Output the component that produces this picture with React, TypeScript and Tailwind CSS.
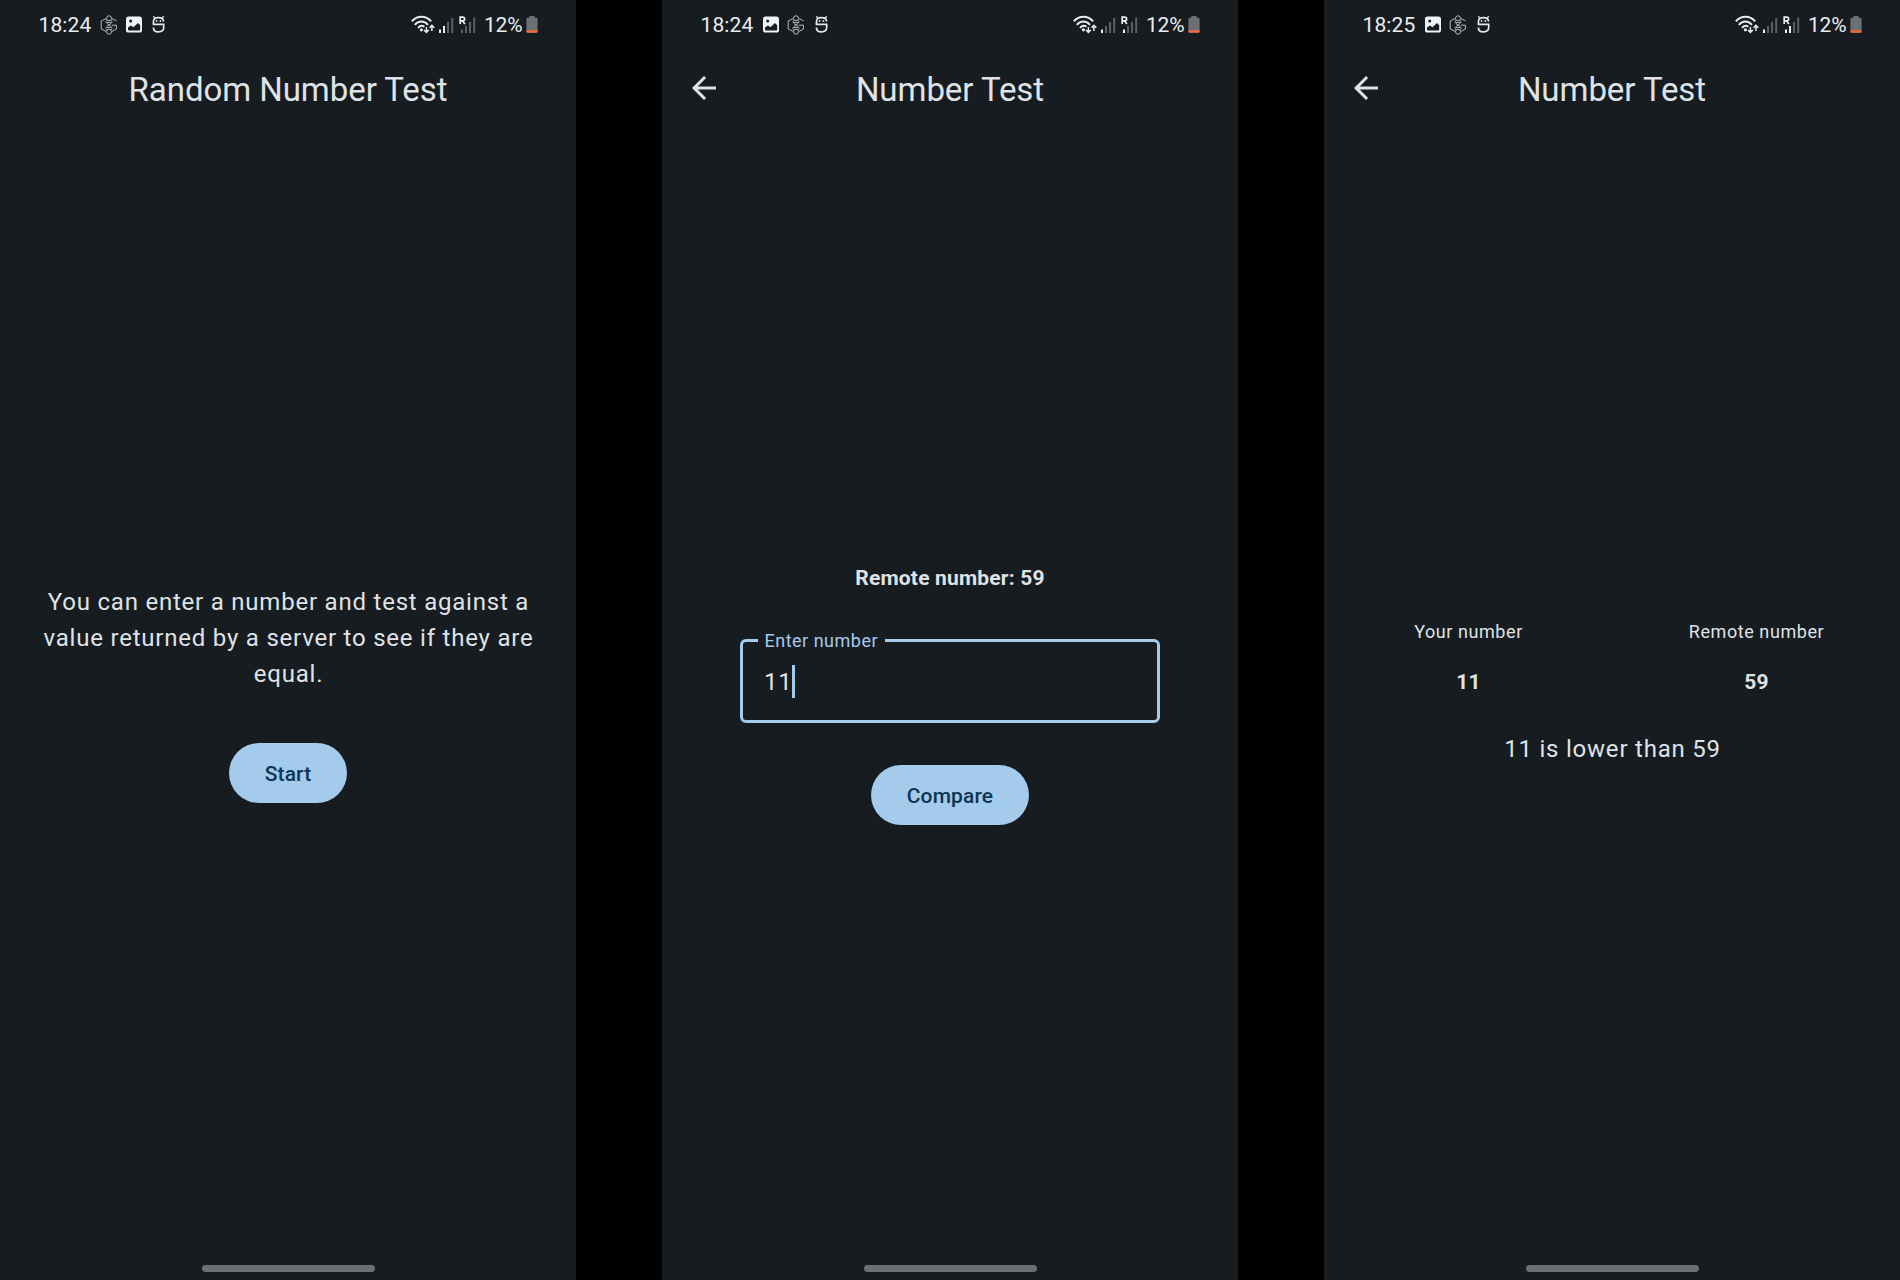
import React from "react";

const GHexIcon = () => (
  <svg width="18" height="20" viewBox="0 0 18 20" fill="none" stroke="#b4bbbf" strokeWidth="1">
    <path d="M6 3.6 1.2 6v8L6 16.4M12 3.6l4.4 2.2M12 16.4l4.4-2.4v-3.8h-4.6" />
    <circle cx="9" cy="3.3" r="2.5" />
    <circle cx="9" cy="16.7" r="2.5" />
    <path d="M7 5.2C5 7 6.4 8.2 9 10s4 3 2 4.8M11 5.2C13 7 11.6 8.2 9 10s-4 3-2 4.8M6.8 7.6h4.4M6.8 12.4h4.4" />
  </svg>
);

const ImageIcon = () => (
  <svg width="16" height="17" viewBox="0 0 16 17">
    <rect x="0" y="0.5" width="16" height="16" rx="2.6" fill="#f0f4f6" />
    <circle cx="4.7" cy="5" r="1.5" fill="#181d20" />
    <path d="M2 13.5V11.6L5 9.4 7.4 11.2 12 7 14.2 9.2V13.5Q14.2 14.4 13.3 14.4H2.9Q2 14.4 2 13.5Z" fill="#181d20" />
  </svg>
);

const BotIcon = () => (
  <svg width="13" height="17" viewBox="0 0 13 17" fill="none" stroke="#e2e7ea" strokeWidth="1.7">
    <path d="M1.3 .4 2.9 2.2M11.7 .4 10.1 2.2" strokeWidth="1.4" />
    <path d="M1.5 8.2V5.4C1.5 3 3.5 1.7 6.5 1.7s5 1.3 5 3.7" />
    <path d="M.7 8.3h11v3c0 2.9-2.1 4.6-5.2 4.6s-5.1-1.6-5.1-4.5" />
    <circle cx="4.6" cy="5" r=".9" fill="#e2e7ea" stroke="none" />
    <circle cx="8.4" cy="5" r=".9" fill="#e2e7ea" stroke="none" />
  </svg>
);

const WifiIcon = () => (
  <svg width="24" height="19" viewBox="0 0 24 19" fill="none" stroke="#e6ebee" strokeWidth="1.9">
    <path d="M.8 6.4C6.2.2 14.8.2 20.2 6.4" />
    <path d="M3.8 9.8c3.8-4.4 9.4-4.4 13.2 0" />
    <path d="M7 12.8c2.2-2.4 4.6-2.4 6.4-1" />
    <circle cx="10.4" cy="14.8" r="1.6" fill="#e6ebee" stroke="none" />
    <path d="M15.4 12v5.2M13 15l2.4 2.4 2.4-2.4M20.9 16v-5M18.5 12.8l2.4-2.4 2.4 2.4" strokeWidth="1.5" />
  </svg>
);

const bar = (lit: boolean) => (lit ? "#eef2f4" : "#596064");

const SignalIcon = ({ level }: { level: number }) => (
  <svg width="15" height="16" viewBox="0 0 15 16">
    <rect x="0" y="12.5" width="2" height="3.5" fill={bar(level > 0)} />
    <rect x="4" y="9" width="2" height="7" fill={bar(level > 1)} />
    <rect x="8" y="5" width="2" height="11" fill={bar(level > 2)} />
    <rect x="12.2" y="1" width="2" height="15" fill={bar(level > 3)} />
  </svg>
);

const RoamingIcon = ({ level }: { level: number }) => (
  <svg width="17" height="17" viewBox="0 0 17 17">
    <path d="M1.2 8V1.1h2.5q1.9 0 1.9 1.9T3.7 4.9H1.2M3.6 4.9 5.9 8" fill="none" stroke="#eef2f4" strokeWidth="1.7" />
    <rect x="2" y="13.5" width="2" height="3.5" fill={bar(level > 0)} />
    <rect x="6" y="10" width="2" height="7" fill={bar(level > 1)} />
    <rect x="10" y="6" width="2" height="11" fill={bar(level > 2)} />
    <rect x="14.2" y="1.5" width="2" height="15.5" fill={bar(level > 3)} />
  </svg>
);

const BatteryIcon = () => (
  <svg width="12" height="17" viewBox="0 0 12 17">
    <path d="M3.4 0h5.2v1.8h1.6Q11.6 1.8 11.6 3.2V15.4Q11.6 16.8 10.2 16.8H1.8Q.4 16.8 .4 15.4V3.2Q.4 1.8 1.8 1.8H3.4Z" fill="#6b7073" />
    <path d="M.4 14.2H11.6V15.4Q11.6 16.8 10.2 16.8H1.8Q.4 16.8 .4 15.4Z" fill="#f0683e" />
  </svg>
);

interface StatusBarProps {
  time: string;
  imageFirst: boolean;
  signal: number;
  roaming: number;
}

const StatusBar = ({ time, imageFirst, signal, roaming }: StatusBarProps) => (
  <div className="flex h-[49px] items-center pl-[38.5px] pr-[38px] text-[21px] leading-6 text-[#e9eef1]">
    <span className="w-[51.5px] whitespace-nowrap tracking-[0.1px]">{time}</span>
    <div className={imageFirst ? "ml-[11px] flex items-center gap-[8px]" : "ml-[10px] flex items-center gap-[8px]"}>
      {imageFirst ? <ImageIcon /> : <GHexIcon />}
      {imageFirst ? <GHexIcon /> : <ImageIcon />}
      <span className="ml-[2px]"><BotIcon /></span>
    </div>
    <div className="ml-auto flex items-center">
      <WifiIcon />
      <span className="ml-[4px]"><SignalIcon level={signal} /></span>
      <span className="ml-[5px]"><RoamingIcon level={roaming} /></span>
      <span className="ml-[8px] w-[41px] whitespace-nowrap tracking-[-0.2px]">12%</span>
      <span className="ml-[1px]"><BatteryIcon /></span>
    </div>
  </div>
);

interface PhoneProps {
  time: string;
  title: string;
  back?: boolean;
  signal: number;
  roaming: number;
  children: React.ReactNode;
}

const Phone = ({ time, title, back = false, signal, roaming, children }: PhoneProps) => (
  <section className="flex h-[1280px] w-[576px] flex-col bg-[#171c20] text-[#dfe3e7]">
    <StatusBar time={time} imageFirst={back} signal={signal} roaming={roaming} />
    <header className="grid h-[79px] grid-cols-[72px_1fr_72px] items-center">
      <div className="pb-[2px] pl-6">
        {back && (
          <svg width="36" height="36" viewBox="0 0 24 24" fill="#dfe3e7" aria-label="Back">
            <path d="M20 11H7.83l5.59-5.59L12 4l-8 8 8 8 1.41-1.41L7.83 13H20v-2z" />
          </svg>
        )}
      </div>
      <h1 className="pt-[3px] text-center text-[33px] leading-[42px] tracking-[-0.06px]">{title}</h1>
    </header>
    <main className="flex flex-1 flex-col items-center">{children}</main>
    <div className="mx-auto mb-[8px] h-[7px] w-[173px] rounded-full bg-[#6b7073]" />
  </section>
);

const PillButton = ({ children }: { children: React.ReactNode }) => (
  <button className="h-[60px] rounded-full bg-[#a4caec] px-9 pt-[2px] text-[21px] font-medium leading-[30px] tracking-[0.15px] text-[#0c3453]">
    {children}
  </button>
);

const Result = ({ label, value }: { label: string; value: string }) => (
  <div className="flex flex-1 flex-col items-center">
    <span className="pl-px text-[18px] leading-6 tracking-[0.57px]">{label}</span>
    <span className="mt-[23px] pl-px text-[21px] font-bold leading-[30px] tracking-[0.15px]">{value}</span>
  </div>
);

export default function App() {
  return (
    <div className="flex h-[1280px] w-[1900px] justify-between overflow-hidden bg-black font-['Roboto',sans-serif]">
      <Phone time="18:24" title="Random Number Test" signal={2} roaming={0}>
        <p className="mt-[456px] w-[528px] pl-px text-center text-[24px] leading-[36px] tracking-[0.78px]">
          You can enter a number and test against a<br />
          value returned by a server to see if they are<br />
          equal.
        </p>
        <div className="mt-[51px]">
          <PillButton>Start</PillButton>
        </div>
      </Phone>

      <Phone time="18:24" title="Number Test" back signal={1} roaming={1}>
        <p className="mt-[435px] text-[21px] font-bold leading-[30px] tracking-[0.18px]">Remote number: 59</p>
        <div className="relative mt-[46px] flex h-[84px] w-[420px] items-center rounded-[6px] border-[3px] border-[#a4caec] px-[21px]">
          <label className="absolute left-[15px] top-[-13px] bg-[#171c20] px-[6.5px] text-[18px] leading-6 tracking-[0.5px] text-[#a4caec]">
            Enter number
          </label>
          <span className="pt-[2px] text-[24px] leading-[36px] tracking-[0.75px]">11</span>
          <span className="h-[33px] w-[3px] bg-[#a4caec]" />
        </div>
        <div className="mt-[42px]">
          <PillButton>Compare</PillButton>
        </div>
      </Phone>

      <Phone time="18:25" title="Number Test" back signal={1} roaming={2}>
        <div className="mt-[492px] flex w-full">
          <Result label="Your number" value="11" />
          <Result label="Remote number" value="59" />
        </div>
        <p className="mt-[34px] pl-px text-[24px] leading-[36px] tracking-[0.78px]">11 is lower than 59</p>
      </Phone>
    </div>
  );
}
